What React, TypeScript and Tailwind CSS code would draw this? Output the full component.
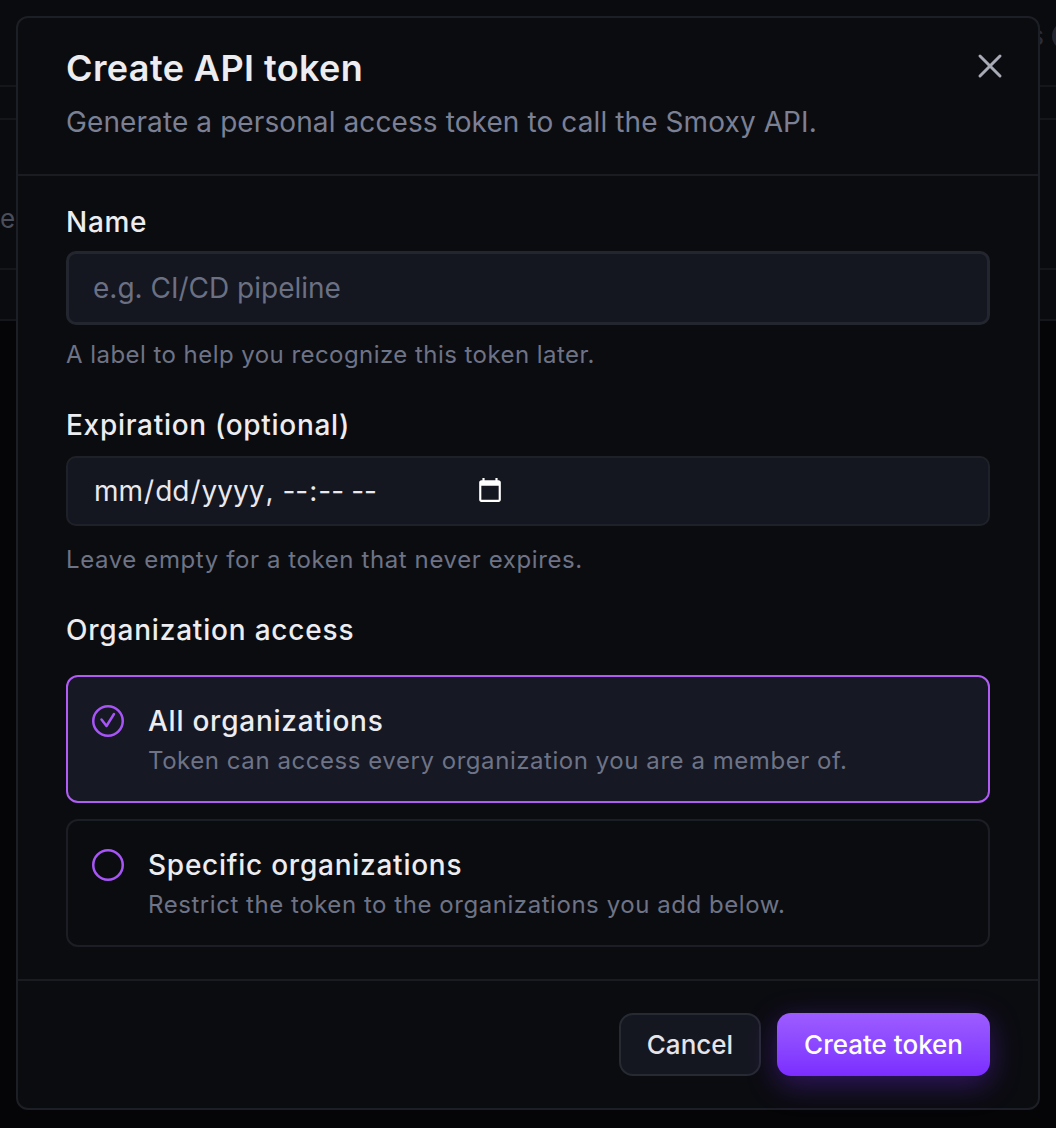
import { X } from "lucide-react"

function Radio({ checked }: { checked: boolean }) {
  return (
    <svg width="32" height="32" viewBox="0 0 32 32" fill="none" className="mt-[4px] shrink-0">
      <circle cx="16" cy="16" r="14.75" stroke="#a855f7" strokeWidth="2.5" />
      {checked && (
        <polyline
          points="9.5,14.5 14.5,21 22,9"
          stroke="#a855f7"
          strokeWidth="2.5"
          strokeLinecap="round"
          strokeLinejoin="round"
        />
      )}
    </svg>
  )
}

const options = [
  {
    id: "all",
    title: "All organizations",
    desc: "Token can access every organization you are a member of.",
  },
  {
    id: "specific",
    title: "Specific organizations",
    desc: "Restrict the token to the organizations you add below.",
  },
]

export default function App() {
  const selected = "all"

  return (
    <div className="relative min-h-screen overflow-hidden bg-[#050507] font-['Inter',sans-serif]">
      {/* page behind the dialog */}
      <div className="bg-[#0a0b0e]">
        <div className="flex h-[87px] items-start justify-end border-b-2 border-[#15161c] pt-[16px]">
          <span className="text-[26px] text-[#2a2d37]">Docs</span>
          <span className="ml-[8px] mr-[-24px] mt-[6px] h-[28px] w-[28px] rounded-full bg-[#232631]" />
        </div>
        <div className="h-[33px] border-b-2 border-[#15161c]" />
        <div className="h-[150px] border-b-2 border-[#15161c] pt-[86px] text-[26px] leading-none text-[#4a4e5a]">
          e
        </div>
        <div className="h-[51px] border-b-2 border-[#15161c]" />
      </div>

      {/* Dialog */}
      <div className="absolute left-[16px] top-[16px] w-[1024px] rounded-[12px] border-2 border-[#1d1f26] bg-[#0b0c10]">
        <div className="relative border-b-2 border-[#1a1c22] px-[48px] pb-[32px] pt-[28px]">
          <h2 className="text-[36px] font-semibold leading-[44px] tracking-[0.4px] text-[#ececf1]">Create API token</h2>
          <p className="mt-[12px] text-[28px] leading-[40px] tracking-[0.1px] text-[#7b8094]">
            Generate a personal access token to call the Smoxy API.
          </p>
          <button className="absolute right-[28px] top-[28px] text-[#a8abb5]">
            <X size={40} strokeWidth={1.8} />
          </button>
        </div>

        <div className="px-[48px] pb-[32px] pt-[26px]">
          <label className="block text-[28px] font-medium leading-[40px] tracking-[0.7px] text-[#ececf1]">Name</label>
          <input
            placeholder="e.g. CI/CD pipeline"
            className="mt-[9px] block h-[74px] w-full rounded-[10px] border-[3px] border-[#24262f] bg-[#141620] px-[24px] text-[28px] text-[#ececf1] outline-none placeholder:text-[#6b7082]"
          />
          <p className="mt-[14px] text-[24px] leading-[32px] tracking-[0.45px] text-[#6e7386]">
            A label to help you recognize this token later.
          </p>

          <label className="mt-[34px] block text-[28px] font-medium leading-[40px] tracking-[0.7px] text-[#ececf1]">
            Expiration (optional)
          </label>
          <input
            type="datetime-local"
            className="mt-[11px] block h-[70px] w-full rounded-[10px] border-2 border-[#1f2129] bg-[#141620] pl-[25px] pr-[24px] text-[28px] text-[#e8e8ee] outline-none [color-scheme:dark] [&::-webkit-datetime-edit]:mr-[28px] [&::-webkit-datetime-edit]:flex-none"
          />
          <p className="mt-[18px] text-[24px] leading-[32px] tracking-[0.6px] text-[#6e7386]">
            Leave empty for a token that never expires.
          </p>

          <p className="mt-[34px] text-[28px] font-medium leading-[40px] tracking-[0.8px] text-[#ececf1]">
            Organization access
          </p>

          <div className="mt-[25px] flex flex-col gap-[16px]">
            {options.map((o) => {
              const on = o.id === selected
              return (
                <div
                  key={o.id}
                  className={`flex gap-[24px] rounded-[12px] border-2 p-[24px] ${
                    on ? "border-[#b05cf5] bg-[#161824]" : "border-[#1c1e25] bg-[#0b0c10]"
                  }`}
                >
                  <Radio checked={on} />
                  <div>
                    <p className="text-[28px] font-medium leading-[40px] tracking-[0.75px] text-[#ececf1]">{o.title}</p>
                    <p className="mt-[4px] text-[24px] leading-[32px] tracking-[0.55px] text-[#6e7386]">{o.desc}</p>
                  </div>
                </div>
              )
            })}
          </div>
        </div>

        <div className="flex justify-end gap-[16px] border-t-2 border-[#1a1c22] px-[48px] pb-[32px] pt-[32px]">
          <button className="h-[63px] rounded-[14px] border-2 border-[#272a33] bg-[#151720] px-[26px] text-[26px] font-medium text-[#e4e4ea]">
            Cancel
          </button>
          <button className="h-[63px] rounded-[14px] bg-linear-to-b from-[#9d5cff] to-[#7c2cff] px-[27px] text-[26px] font-medium text-white shadow-[0_8px_30px_rgba(124,44,255,0.35)]">
            Create token
          </button>
        </div>
      </div>
    </div>
  )
}
